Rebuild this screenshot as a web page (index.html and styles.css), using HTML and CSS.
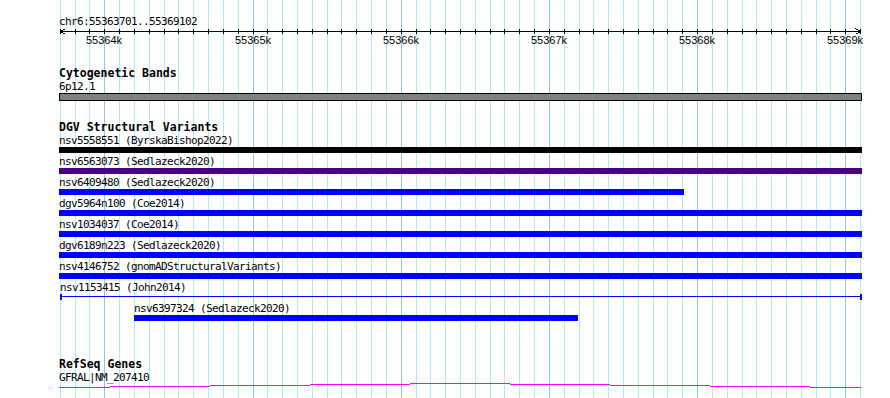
FILE: index.html
```html
<!DOCTYPE html>
<html lang="en">
<head>
<meta charset="UTF-8">
<meta name="viewport" content="width=device-width, initial-scale=1.0">
<title>chr6:55363701..55369102</title>
<link rel="stylesheet" href="styles.css">
</head>
<body>
<div id="view">
    <div id="grid"></div>

    <div class="ruler">
        <div class="ruler-label">chr6:55363701..55369102</div>
        <svg id="scale" class="scale" width="890" height="6"></svg>
        <div id="tick-labels" class="tick-labels"></div>
    </div>

    <div class="track track-cyto">
        <div class="track-label">Cytogenetic Bands</div>
        <div class="feature-label">6p12.1</div>
        <div class="band"></div>
    </div>

    <div class="track track-dgv" id="dgv">
        <div class="track-label">DGV Structural Variants</div>
    </div>

    <div class="track track-genes">
        <div class="track-label">RefSeq Genes</div>
        <div class="feature-label gene-label">GFRAL|NM_207410</div>
        <svg class="gene" width="803" height="5">
            <rect x="0" y="4" width="51" height="1"></rect>
            <rect x="51" y="3" width="100" height="1"></rect>
            <rect x="151" y="2" width="100" height="1"></rect>
            <rect x="251" y="1" width="100" height="1"></rect>
            <rect x="351" y="0" width="100" height="1"></rect>
            <rect x="451" y="1" width="100" height="1"></rect>
            <rect x="551" y="2" width="100" height="1"></rect>
            <rect x="651" y="3" width="100" height="1"></rect>
            <rect x="751" y="4" width="51" height="1"></rect>
        </svg>
    </div>
</div>

<script>
    const originBp = 55364000;
    const originX = 104.3;
    const pxPerBp = 0.1482;
    const viewLeft = 59;
    const viewRight = 862;
    const svgNs = 'http://www.w3.org/2000/svg';

    function bpToX(bp) {
        return Math.round(originX + (bp - originBp) * pxPerBp);
    }

    // grid lines, ticks and tick labels, one every 100bp
    const grid = document.getElementById('grid');
    const scale = document.getElementById('scale');
    const tickLabels = document.getElementById('tick-labels');

    function rect(parent, x, y, w, h) {
        const r = document.createElementNS(svgNs, 'rect');
        r.setAttribute('x', x);
        r.setAttribute('y', y);
        r.setAttribute('width', w);
        r.setAttribute('height', h);
        parent.appendChild(r);
    }

    rect(scale, 60, 3, 801, 1);

    for (let bp = 55363700; bp <= 55369100; bp += 100) {
        const x = bpToX(bp);
        const line = document.createElement('div');
        line.className = bp % 1000 === 0 ? 'gridline major' : 'gridline';
        line.style.left = x + 'px';
        grid.appendChild(line);

        rect(scale, x, 1, 1, 5);

        if (bp % 1000 === 0) {
            const label = document.createElement('span');
            label.className = 'tick-label';
            label.style.left = x + 'px';
            label.textContent = (bp / 1000) + 'k';
            tickLabels.appendChild(label);
        }
    }

    const arrows = document.createElementNS(svgNs, 'path');
    arrows.setAttribute('d', 'M65.5 0.5 L60.5 3.5 L65.5 6.5 M855.5 0.5 L860.5 3.5 L855.5 6.5');
    arrows.setAttribute('class', 'arrow');
    scale.appendChild(arrows);

    // DGV structural variants
    const variants = [
        { name: 'nsv5558551 (ByrskaBishop2022)', start: 55360000, end: 55372000, kind: 'black' },
        { name: 'nsv6563073 (Sedlazeck2020)', start: 55360000, end: 55372000, kind: 'indigo' },
        { name: 'nsv6409480 (Sedlazeck2020)', start: 55360000, end: 55367912, kind: 'blue' },
        { name: 'dgv5964n100 (Coe2014)', start: 55360000, end: 55372000, kind: 'blue' },
        { name: 'nsv1034037 (Coe2014)', start: 55360000, end: 55372000, kind: 'blue' },
        { name: 'dgv6189n223 (Sedlazeck2020)', start: 55360000, end: 55372000, kind: 'blue' },
        { name: 'nsv4146752 (gnomADStructuralVariants)', start: 55360000, end: 55372000, kind: 'blue' },
        { name: 'nsv1153415 (John2014)', start: 55363702, end: 55372000, kind: 'thin' },
        { name: 'nsv6397324 (Sedlazeck2020)', start: 55364200, end: 55367196, kind: 'blue' }
    ];

    const dgv = document.getElementById('dgv');
    variants.forEach(v => {
        const left = Math.max(viewLeft, bpToX(v.start));
        const right = Math.min(viewRight, bpToX(v.end));
        const row = document.createElement('div');
        row.className = 'row';
        row.style.marginLeft = (left - viewLeft) + 'px';

        const label = document.createElement('div');
        label.className = 'feature-label';
        label.textContent = v.name;

        const bar = document.createElement('div');
        bar.className = 'bar bar-' + v.kind;
        bar.style.width = (right - left) + 'px';

        row.appendChild(label);
        row.appendChild(bar);
        dgv.appendChild(row);
    });
</script>
</body>
</html>
```

FILE: styles.css
```css
body {
    margin: 0;
    padding: 0;
    background: #fff;
}

#view {
    position: relative;
    z-index: 0;
    width: 890px;
    height: 398px;
    overflow: hidden;
    font-family: "DejaVu Sans Mono", monospace;
    font-size: 11px;
    letter-spacing: -0.62px;
    line-height: 13px;
    color: #000;
    white-space: nowrap;
}

#grid {
    position: absolute;
    top: 0;
    left: 0;
    right: 0;
    bottom: 0;
    z-index: -1;
}

.gridline {
    position: absolute;
    top: 0;
    bottom: 0;
    width: 1px;
    background: #aaeeee;
}

.gridline.major {
    background: #88c8e8;
}

.ruler {
    padding-top: 15px;
}

.ruler-label {
    padding-left: 59px;
}

.scale {
    display: block;
    shape-rendering: crispEdges;
    fill: #000;
}

.scale .arrow {
    fill: none;
    stroke: #000;
    stroke-width: 1;
}

.tick-labels {
    position: relative;
    height: 13px;
    font-family: "Liberation Sans", Arial, sans-serif;
    letter-spacing: 0;
}

.tick-label {
    position: absolute;
    top: 0;
    transform: translateX(-50%);
}

.track {
    padding-left: 59px;
}

.track-cyto {
    margin-top: 20px;
}

.track-dgv {
    margin-top: 20px;
}

.track-genes {
    margin-top: 35px;
    line-height: 12px;
}

.track-label {
    font-weight: bold;
    font-size: 11.5px;
    letter-spacing: 0;
}

.band {
    width: 803px;
    height: 8px;
    box-sizing: border-box;
    border: 1px solid #000;
    background: #808080;
}

.row {
    padding-bottom: 2px;
}

.bar {
    height: 6px;
    box-sizing: border-box;
}

.bar-black {
    background: #000;
}

.bar-indigo {
    background: #4b0082;
}

.bar-blue {
    background: #0000ff;
}

.bar-thin {
    border-left: 2px solid #0000ff;
    border-right: 2px solid #0000ff;
    background: linear-gradient(to bottom, transparent 2px, #0000ff 2px, #0000ff 3px, transparent 3px);
}

.gene-label {
    margin-top: 2px;
}

.gene {
    display: block;
    margin-top: -1px;
    shape-rendering: crispEdges;
    fill: #ff00ff;
}
```
